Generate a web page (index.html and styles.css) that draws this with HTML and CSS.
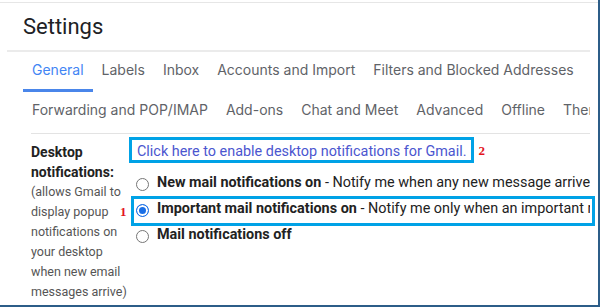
FILE: index.html
```html
<!DOCTYPE html>
<html lang="en">
<head>
<meta charset="utf-8">
<title>Settings</title>
<link rel="stylesheet" href="styles.css">
</head>
<body>
<div class="frame">
  <div class="topline"></div>
  <header class="header"><h1 class="title">Settings</h1></header>
  <div class="shadow"></div>
  <div class="page">
    <nav class="tabs">
      <div class="tab-row">
        <span class="tab active">General</span>
        <span class="tab">Labels</span>
        <span class="tab">Inbox</span>
        <span class="tab">Accounts and Import</span>
        <span class="tab">Filters and Blocked Addresses</span>
      </div>
      <div class="tab-row second">
        <span class="tab">Forwarding and POP/IMAP</span>
        <span class="tab">Add-ons</span>
        <span class="tab">Chat and Meet</span>
        <span class="tab">Advanced</span>
        <span class="tab">Offline</span>
        <span class="tab">Themes</span>
      </div>
    </nav>
    <div class="sep"></div>
    <section class="setting">
      <div class="label-col">
        <div class="label">Desktop notifications:</div>
        <div class="hint">(allows Gmail to display popup notifications on your desktop when new email messages arrive)</div>
      </div>
      <div class="value-col">
        <div class="link-line"><a class="link-box">Click here to enable desktop notifications for Gmail.</a><span class="marker">2</span></div>
        <div class="options">
          <div class="option"><span class="radio"></span><b>New mail notifications on</b>&nbsp;- Notify me when any new message arrives</div>
          <div class="option"><span class="radio checked"></span><b>Important mail notifications on</b>&nbsp;- Notify me only when an important message arrives</div>
          <div class="option"><span class="radio"></span><b>Mail notifications off</b></div>
        </div>
      </div>
    </section>
  </div>
  <div class="note-box"></div>
  <span class="marker marker-one">1</span>
</div>
</body>
</html>
```
FILE: styles.css
```css
* { box-sizing: border-box; }
html, body { margin: 0; padding: 0; background: #fff; }
body { font-family: Roboto, "Liberation Sans", Arial, sans-serif; color: #222; }

.frame {
  position: relative;
  width: 600px;
  height: 307px;
  border-right: 2px solid #2c5d88;
  border-bottom: 2px solid #2c5d88;
  overflow: hidden;
  background: #fff;
}
.topline { margin-top: 2px; height: 1px; background: #e6e6e6; }

.header { height: 47px; padding: 10px 0 0 23px; }
.title { margin: 0; font-family: Roboto, "Liberation Sans", Arial, sans-serif; font-size: 22px; line-height: 28px; font-weight: 400; color: #202124; }

.shadow { margin-left: 7px; width: 583px; height: 2px; background: #ebebeb; }

.page { width: 590px; overflow: hidden; }

.tabs { padding-left: 23px; }
.tab-row { display: flex; white-space: nowrap; }
.tab {
  padding: 8px 9px 9px;
  font-family: Inter, Roboto, "Liberation Sans", sans-serif;
  font-size: 14px;
  line-height: 20px;
  color: #5f6368;
  border-bottom: 3px solid transparent;
}
.tab.active { color: #4285f4; border-bottom-color: #4a86ea; }
.tab-row.second .tab { padding-bottom: 13px; border-bottom: 0; }

.sep { margin-left: 31px; height: 1px; background: #e3e3e3; }

.setting { display: flex; }
.label-col { width: 130px; padding: 8px 0 0 31px; flex-shrink: 0; }
.label { font-size: 14px; font-weight: 700; line-height: 20px; color: #222; }
.hint { font-size: 12.5px; line-height: 20px; color: #555; }

.value-col { margin-left: -1px; padding-top: 3px; white-space: nowrap; }
.link-line { display: flex; align-items: flex-start; }
.link-box {
  display: inline-block;
  height: 26px;
  border: 3px solid #00a2e6;
  padding: 2px 5px 0 5px;
  font-size: 14.4px;
  line-height: 20px;
  color: #4b56cf;
  cursor: pointer;
}
.marker {
  font-family: "Liberation Serif", "Times New Roman", serif;
  font-weight: 700;
  font-size: 13px;
  color: #e3141c;
}
.link-line .marker { margin: 7px 0 0 4px; line-height: 13px; }

.options { margin-top: 7px; }
.option {
  display: flex;
  align-items: center;
  height: 26px;
  font-size: 14.4px;
  line-height: 26px;
  color: #222;
}
.option b { font-weight: 700; }
.radio {
  width: 13px;
  height: 13px;
  margin: 2px 8px 0 7px;
  border: 1px solid #767676;
  border-radius: 50%;
  flex-shrink: 0;
  background: #fff;
}
.radio.checked {
  border: 1.5px solid #1a6fe6;
  box-shadow: inset 0 0 0 2px #fff;
  background: #1a6fe6;
}

.note-box {
  position: absolute;
  left: 131px;
  top: 196px;
  width: 464px;
  height: 30px;
  border: 3px solid #00a2e6;
}
.marker-one { position: absolute; left: 120px; top: 205px; line-height: 13px; }
```
